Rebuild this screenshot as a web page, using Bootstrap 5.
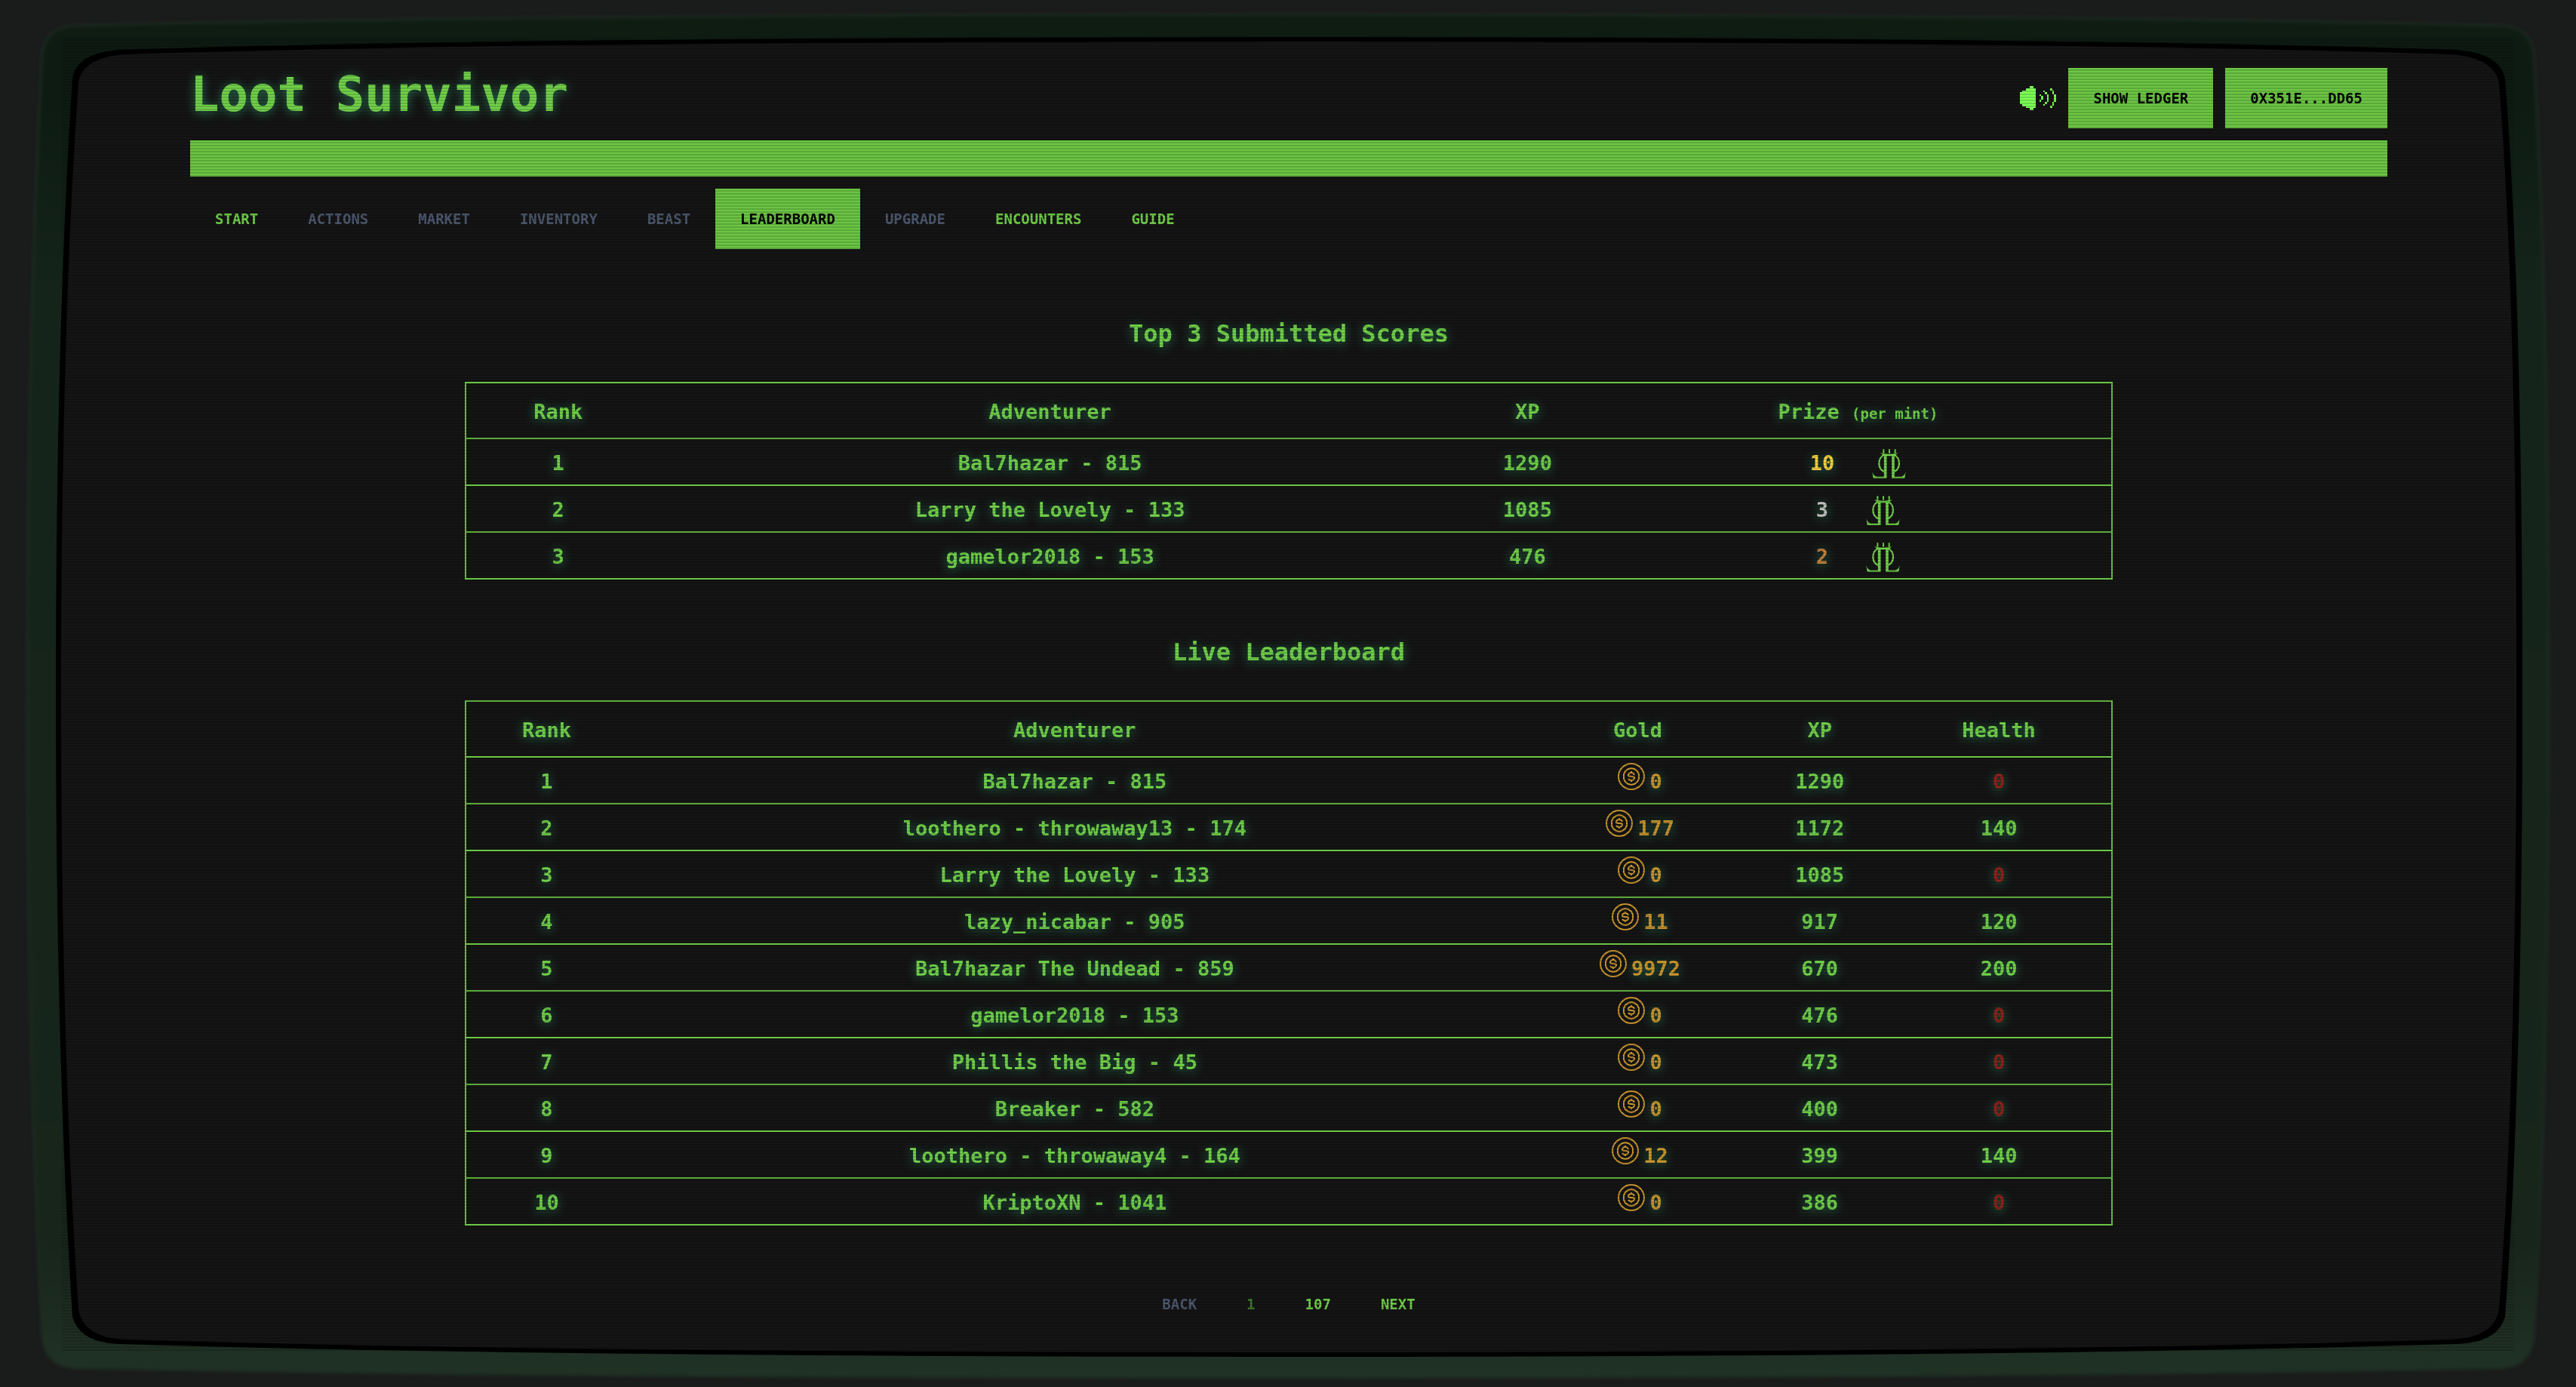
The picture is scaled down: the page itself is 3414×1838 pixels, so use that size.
<!DOCTYPE html>
<html lang="en">
<head>
<meta charset="utf-8">
<meta name="viewport" content="width=device-width, initial-scale=1">
<title>Loot Survivor</title>
<link href="https://cdn.jsdelivr.net/npm/bootstrap@5.3.0/dist/css/bootstrap.min.css" rel="stylesheet">
<style>
:root{--term:#6cc644;--term-text:#72d14a;--glow:0 2px 14px rgba(60,190,130,.6)}
body{font-family:"DejaVu Sans Mono",monospace;font-weight:700;background:#1a1b1b;color:var(--term-text);min-height:100vh}
/* monitor housing behind the content */
.bezel{position:fixed;inset:0;width:100%;height:100%;z-index:-1}
/* scanlines over the glass */
body::after{content:"";position:fixed;inset:52px 82px 48px;pointer-events:none;z-index:10;background:repeating-linear-gradient(to bottom,rgba(0,0,0,.15) 0 2px,transparent 2px 4px)}
.terminal{padding:90px 250px 0 252px}
.game-title{font-size:64px;line-height:70px;font-weight:700;text-shadow:var(--glow)}
.divider-bar{height:48px;background:var(--term)}
.btn-term{--bs-btn-color:var(--term-text);--bs-btn-bg:transparent;--bs-btn-border-width:0;--bs-btn-border-radius:0;--bs-btn-padding-x:33px;--bs-btn-padding-y:0;--bs-btn-font-size:19px;--bs-btn-font-weight:700;--bs-btn-line-height:80px;--bs-btn-hover-color:#000;--bs-btn-hover-bg:var(--term);--bs-btn-disabled-color:#4d596f;--bs-btn-disabled-bg:transparent;--bs-btn-disabled-opacity:1;text-transform:uppercase;white-space:nowrap}
.btn-fill{--bs-btn-color:#000;--bs-btn-bg:var(--term)}
.btn-page{--bs-btn-disabled-color:#3f7a2a}
.sound{width:48px;height:32px;color:#7dff55}
.section-title{font-size:32px;line-height:48px;font-weight:700;margin-bottom:40px;text-shadow:var(--glow)}
.scores{width:75%;table-layout:fixed;border-collapse:collapse;border:2px solid var(--term);font-size:27px;line-height:56px;text-align:center;text-shadow:var(--glow)}
.scores tr{border-bottom:2px solid var(--term)}
.scores th,.scores td{padding:4px 0 0;white-space:nowrap}
.scores th{line-height:68px;text-align:center;font-weight:700}
.per{font-size:19px;line-height:1}
.prize{gap:50px;height:56px}
.lords{width:45px;height:39px;color:var(--term-text)}
.coin{width:48px;height:36px;vertical-align:-2px}
.gold{color:#c9962f}.first{color:#fbd541}.second{color:#c0c0c0}.third{color:#c8843c}.dead{color:#8f231c}
.space-top{margin-top:88px}.space-mid{margin-top:72px}.space-end{margin-top:64px}
</style>
<script src="https://cdn.jsdelivr.net/npm/bootstrap@5.3.0/dist/js/bootstrap.bundle.min.js"></script>
</head>
<body>
<svg class="bezel" viewBox="0 0 3414 1838" preserveAspectRatio="none" aria-hidden="true">
  <defs>
    <linearGradient id="case" x1="0" y1="0" x2="0" y2="1"><stop offset="0" stop-color="#0e1c12"/><stop offset=".06" stop-color="#0d1b12"/><stop offset=".2" stop-color="#15241a"/><stop offset=".9" stop-color="#17251b"/><stop offset=".97" stop-color="#1f2e23"/><stop offset="1" stop-color="#203325"/></linearGradient>
    <filter id="soft" x="-2%" y="-2%" width="104%" height="104%" color-interpolation-filters="sRGB"><feGaussianBlur stdDeviation="2"/></filter>
  </defs>
  <path filter="url(#soft)" fill="url(#case)" stroke="#1d2c22" stroke-width="3" d="M98 34Q700 19 1707 19T3316 34Q3354 37 3358 70Q3378 400 3378 919T3358 1775Q3352 1811 3316 1813Q2700 1826 1707 1826T98 1813Q62 1811 56 1775Q36 1400 36 919T56 70Q60 37 98 34Z"/>
  <path fill="#000" d="M160 66Q700 49 1707 49T3254 66Q3314 70 3320 105Q3343 400 3343 919T3320 1745Q3310 1780 3254 1781Q2700 1798 1707 1798T160 1781Q106 1780 96 1745Q74 1400 74 919T96 105Q100 70 160 66Z"/>
  <path fill="#151515" d="M165 72Q700 55 1707 55T3249 72Q3306 77 3312 110Q3335 400 3335 919T3312 1735Q3306 1772 3249 1775Q2700 1792 1707 1792T165 1775Q110 1772 104 1735Q81 1400 81 919T104 110Q108 77 165 72Z"/>
</svg>
<svg class="d-none" aria-hidden="true">
  <symbol id="coin" viewBox="0 0 48 36"><g fill="none" stroke="currentColor" stroke-width="2"><circle cx="24" cy="18" r="17"/><path d="M24 7l4 1 4 3 2 4v6l-2 4-4 3-4 1-4-1-4-3-2-4v-6l2-4 4-3z"/><path d="M28 16q-1-3-4-3t-4 2.500 4 2.500 4 2.500-4 2.500-4-2M24 11v2M24 23v2"/></g></symbol>
  <symbol id="lords" viewBox="0 0 135 117"><g fill="none" stroke="currentColor"><path stroke-width="7" d="M50 22C20 34 20 84 54 92M86 22C116 34 116 84 82 92"/><path stroke-width="11" d="M53 22V114M84 22V114"/><path stroke-width="6" d="M58 113H8M79 113h48"/><path stroke-width="6" d="M46 1v16M69 1v16M92 1v16"/></g><path fill="currentColor" d="M33 16q36 8 71 0l-10 7H82v5H56v-5H43zM1 91q5 18 22 21l-18 4zM134 91q-5 18-22 21l18 4z"/></symbol>
</svg>

<main class="terminal">
  <header class="d-flex justify-content-between align-items-start">
    <h1 class="game-title m-0">Loot Survivor</h1>
    <div class="d-flex align-items-center gap-3">
      <button type="button" class="btn p-0 border-0 d-flex" aria-label="Toggle sound"><svg class="sound" viewBox="57 71 144 96" fill="currentColor" shape-rendering="crispEdges"><path d="M57 95h8v-7h16v-8h15v-8h16v8h8v78h-8v8H96v-8H81v-7H65v-8h-8z"/><path d="M134 103h7v8h8v15h-8v8h-7v-8h7v-15h-7zM150 88h7v7h8v8h7v31h-7v8h-8v7h-7v-7h7v-8h8v-31h-8v-8h-7zM178 80h7v8h8v15h8v31h-8v15h-8v8h-7v-8h7v-15h8v-31h-8v-15h-7z"/></svg></button>
      <button type="button" class="btn btn-term btn-fill">Show Ledger</button>
      <button type="button" class="btn btn-term btn-fill">0x351e...dd65</button>
    </div>
  </header>
  <div class="divider-bar my-3"></div>
  <nav class="d-flex" aria-label="Screens">
    <button type="button" class="btn btn-term">Start</button>
    <button type="button" class="btn btn-term" disabled>Actions</button>
    <button type="button" class="btn btn-term" disabled>Market</button>
    <button type="button" class="btn btn-term" disabled>Inventory</button>
    <button type="button" class="btn btn-term" disabled>Beast</button>
    <button type="button" class="btn btn-term btn-fill" aria-current="page">Leaderboard</button>
    <button type="button" class="btn btn-term" disabled>Upgrade</button>
    <button type="button" class="btn btn-term">Encounters</button>
    <button type="button" class="btn btn-term">Guide</button>
  </nav>

  <section class="space-top">
    <h2 class="section-title text-center">Top 3 Submitted Scores</h2>
    <table class="scores mx-auto">
      <colgroup><col style="width:11.2%"><col style="width:48.6%"><col style="width:9.4%"><col style="width:30.8%"></colgroup>
      <thead><tr><th>Rank</th><th>Adventurer</th><th>XP</th><th>Prize <span class="per">(per mint)</span></th></tr></thead>
      <tbody>
        <tr><td>1</td><td>Bal7hazar - 815</td><td>1290</td><td><div class="prize d-flex justify-content-center align-items-center"><span class="first">10</span><svg class="lords"><use href="#lords"/></svg></div></td></tr>
        <tr><td>2</td><td>Larry the Lovely - 133</td><td>1085</td><td><div class="prize d-flex justify-content-center align-items-center"><span class="second">3</span><svg class="lords"><use href="#lords"/></svg></div></td></tr>
        <tr><td>3</td><td>gamelor2018 - 153</td><td>476</td><td><div class="prize d-flex justify-content-center align-items-center"><span class="third">2</span><svg class="lords"><use href="#lords"/></svg></div></td></tr>
      </tbody>
    </table>
  </section>

  <section class="space-mid">
    <h2 class="section-title text-center">Live Leaderboard</h2>
    <table class="scores mx-auto">
      <colgroup><col style="width:9.8%"><col style="width:54.4%"><col style="width:14%"><col style="width:8.1%"><col style="width:13.7%"></colgroup>
      <thead><tr><th>Rank</th><th>Adventurer</th><th>Gold</th><th>XP</th><th>Health</th></tr></thead>
      <tbody>
        <tr><td>1</td><td>Bal7hazar - 815</td><td class="gold"><svg class="coin"><use href="#coin"/></svg>0</td><td>1290</td><td class="dead">0</td></tr>
        <tr><td>2</td><td>loothero - throwaway13 - 174</td><td class="gold"><svg class="coin"><use href="#coin"/></svg>177</td><td>1172</td><td>140</td></tr>
        <tr><td>3</td><td>Larry the Lovely - 133</td><td class="gold"><svg class="coin"><use href="#coin"/></svg>0</td><td>1085</td><td class="dead">0</td></tr>
        <tr><td>4</td><td>lazy_nicabar - 905</td><td class="gold"><svg class="coin"><use href="#coin"/></svg>11</td><td>917</td><td>120</td></tr>
        <tr><td>5</td><td>Bal7hazar The Undead - 859</td><td class="gold"><svg class="coin"><use href="#coin"/></svg>9972</td><td>670</td><td>200</td></tr>
        <tr><td>6</td><td>gamelor2018 - 153</td><td class="gold"><svg class="coin"><use href="#coin"/></svg>0</td><td>476</td><td class="dead">0</td></tr>
        <tr><td>7</td><td>Phillis the Big - 45</td><td class="gold"><svg class="coin"><use href="#coin"/></svg>0</td><td>473</td><td class="dead">0</td></tr>
        <tr><td>8</td><td>Breaker - 582</td><td class="gold"><svg class="coin"><use href="#coin"/></svg>0</td><td>400</td><td class="dead">0</td></tr>
        <tr><td>9</td><td>loothero - throwaway4 - 164</td><td class="gold"><svg class="coin"><use href="#coin"/></svg>12</td><td>399</td><td>140</td></tr>
        <tr><td>10</td><td>KriptoXN - 1041</td><td class="gold"><svg class="coin"><use href="#coin"/></svg>0</td><td>386</td><td class="dead">0</td></tr>
      </tbody>
    </table>
  </section>

  <nav class="d-flex justify-content-center space-end" aria-label="Leaderboard pages">
    <button type="button" class="btn btn-term" disabled>Back</button>
    <button type="button" class="btn btn-term btn-page" disabled>1</button>
    <button type="button" class="btn btn-term">107</button>
    <button type="button" class="btn btn-term">Next</button>
  </nav>
</main>
</body>
</html>
